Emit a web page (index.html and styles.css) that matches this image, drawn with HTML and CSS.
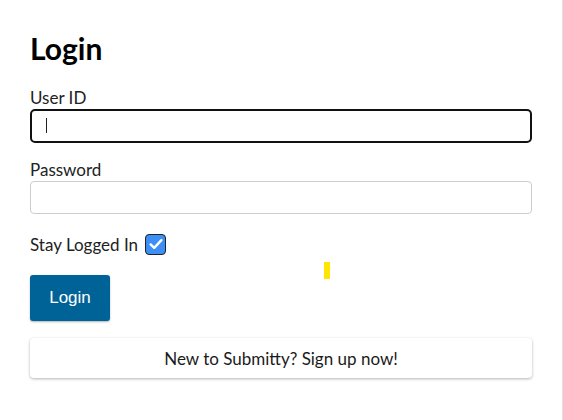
FILE: index.html
```html
<!DOCTYPE html>
<html>
<head>
<meta charset="utf-8">
<link rel="stylesheet" href="styles.css">
</head>
<body>
<div class="page">
  <main class="card">
    <h1 class="title">Login</h1>
    <form class="form">
      <div class="field">
        <label class="label">User ID</label>
        <div class="input input-focus"><span class="caret"></span></div>
      </div>
      <div class="field">
        <label class="label">Password</label>
        <div class="input"></div>
      </div>
      <div class="stay">
        <span>Stay Logged In</span>
        <span class="checkbox">
          <svg width="16" height="16" viewBox="0 0 16 16"><path d="M2.6 8.4 L6.2 11.8 L13.4 4.2" fill="none" stroke="#fff" stroke-width="2.4" stroke-linecap="round" stroke-linejoin="round"/></svg>
        </span>
        <span class="marker"></span>
      </div>
      <div class="actions">
        <button type="button" class="btn-primary">Login</button>
      </div>
      <button type="button" class="btn-signup">New to Submitty? Sign up now!</button>
    </form>
  </main>
</div>
</body>
</html>
```
FILE: styles.css
```css
* { box-sizing: border-box; }
html, body { margin: 0; padding: 0; background: #fff; }
body { font-family: Lato, "Noto Sans", sans-serif; color: #1a1a1a; }
.page {
  width: 563px;
  height: 420px;
  border-right: 1px solid #e2e2e2;
  padding: 30px 31px 0 30px;
}
.card { width: 502px; }
.title {
  margin: 0;
  font-size: 30px;
  font-weight: 700;
  line-height: 36px;
  color: #000;
}
.form { margin-top: 20px; display: flex; flex-direction: column; }
.field { display: flex; flex-direction: column; margin-bottom: 15px; }
.field + .field { margin-bottom: 19px; }
.label { font-size: 17px; line-height: 23px; color: #222; }
.input {
  height: 33px;
  border: 1px solid #cdcdcd;
  border-radius: 4px;
  background: #fff;
  position: relative;
}
.input-focus {
  height: 34px;
  border: 2px solid #111;
  border-radius: 5px;
}
.caret {
  position: absolute;
  left: 14px;
  top: 7px;
  width: 1px;
  height: 15px;
  background: #222;
}
.stay {
  display: flex;
  align-items: center;
  gap: 7px;
  font-size: 17px;
  height: 22px;
  position: relative;
  color: #222;
}
.checkbox {
  width: 21px;
  height: 21px;
  border: 1.5px solid #222;
  border-radius: 4px;
  background: #3d8ff5;
  display: flex;
  align-items: center;
  justify-content: center;
}
.marker {
  position: absolute;
  left: 294px;
  top: 29px;
  width: 6px;
  height: 17px;
  background: #ffe600;
}
.actions { margin-top: 20px; }
.btn-primary {
  width: 80px;
  height: 46px;
  border: none;
  border-radius: 3px;
  background: #006398;
  color: #fff;
  font-family: "Liberation Sans", Arial, sans-serif;
  font-size: 17px;
  box-shadow: 0 1px 2px rgba(0,0,0,0.3);
  padding: 0;
}
.btn-signup {
  margin-top: 17px;
  width: 502px;
  height: 40px;
  border: none;
  border-radius: 4px;
  background: #fff;
  color: #1a1a1a;
  font-family: Lato, "Noto Sans", sans-serif;
  font-size: 17px;
  box-shadow: 0 1px 3px rgba(0,0,0,0.3);
  padding: 0;
}
```
